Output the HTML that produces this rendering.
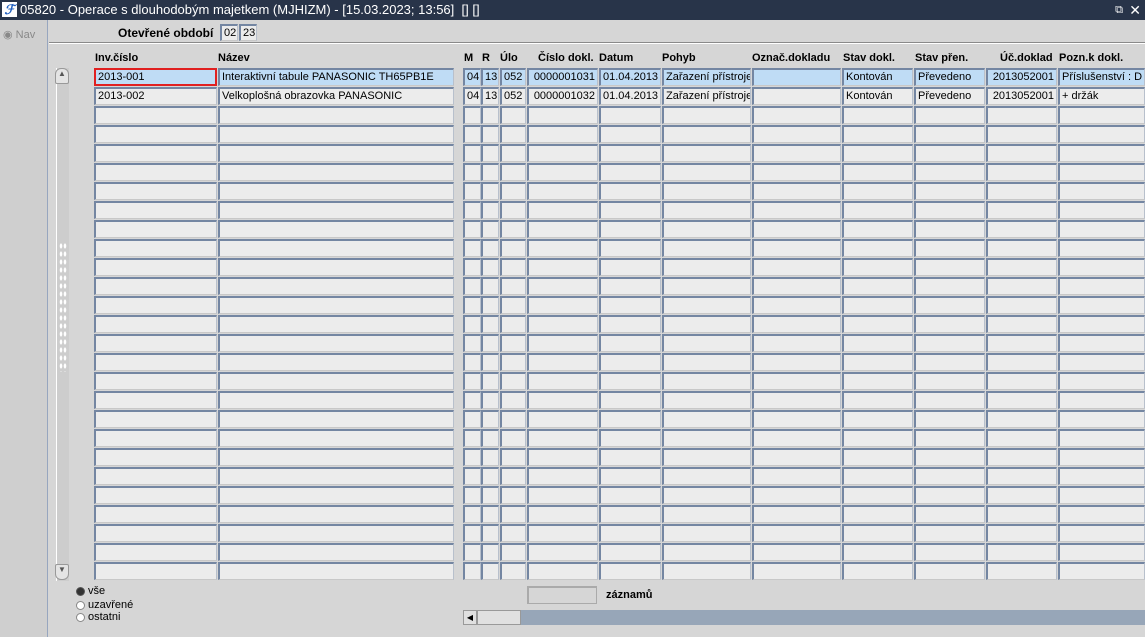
<!DOCTYPE html>
<html><head><meta charset="utf-8"><style>
*{box-sizing:border-box;margin:0;padding:0}
body{width:1145px;height:637px;background:#d6d6d6;font-family:"Liberation Sans",Arial,sans-serif;font-size:11px;color:#000;position:relative;overflow:hidden}
.t{position:absolute;left:0;top:0;width:1145px;height:20px;background:#283449;color:#fff;font-size:13px;line-height:20px;padding-left:20px}
.logo{position:absolute;left:2px;top:2px;width:15px;height:15px;background:#fff;color:#1f5fc0;font-weight:bold;font-style:italic;font-size:13px;line-height:15px;text-align:center}
.a{position:absolute}
.f{position:absolute;height:18px;background:#ececec;border-top:2px solid #7486a2;border-left:2px solid #7486a2;border-right:1px solid #b8c0cc;border-bottom:1px solid #c8c8c8;line-height:15px;padding-left:2px;white-space:nowrap;overflow:hidden}
.s{background:#bfdcf5}
.h{position:absolute;top:52px;font-weight:bold;font-size:11px}
.r{text-align:right;padding-right:2px}
.rad{position:absolute;width:9px;height:9px;border-radius:50%;background:#fff;border:1px solid #888}
</style></head><body>
<div class="t"><div class="logo">ℱ</div>05820 - Operace s dlouhodobým majetkem (MJHIZM) - [15.03.2023; 13:56]&nbsp; [] []
<span style="position:absolute;right:22px;top:0;font-size:11px">⧉</span><span style="position:absolute;right:4px;top:0;font-size:14px">✕</span></div>
<div class="a" style="left:0;top:20px;width:48px;height:617px;background:#cfcfcf;border-right:1px solid #97a6bf"></div>
<div class="a" style="left:3px;top:28px;color:#888;font-size:11px">◉ Nav</div>
<div class="a" style="left:118px;top:26px;font-weight:bold;font-size:12px">Otevřené období</div>
<div class="f" style="left:220px;top:24px;width:18px;height:17px">02</div>
<div class="f" style="left:239px;top:24px;width:18px;height:17px">23</div>
<div class="a" style="left:49px;top:42px;width:1096px;height:1px;background:#8a8a8a"></div>
<div class="a" style="left:49px;top:43px;width:1096px;height:1px;background:#fff"></div>
<div class="a" style="left:56px;top:68px;width:1px;height:513px;background:#fff"></div>
<div class="a" style="left:57px;top:68px;width:12px;height:513px;background:#cdcdcd"></div>
<div class="a" style="left:55px;top:68px;width:14px;height:16px;border:1px solid #999;border-radius:6px 6px 2px 2px;background:#e4e4e4;font-size:8px;text-align:center;color:#555">▲</div>
<div class="a" style="left:55px;top:564px;width:14px;height:16px;border:1px solid #999;border-radius:2px 2px 6px 6px;background:#e4e4e4;font-size:8px;text-align:center;color:#555">▼</div>
<div class="a" style="left:59px;top:242px;width:8px;height:130px;background-image:radial-gradient(#fff 1px,transparent 1.5px);background-size:4px 8px"></div>
<div class="h" style="left:95px">Inv.číslo</div>
<div class="h" style="left:218px">Název</div>
<div class="h" style="left:464px">M</div>
<div class="h" style="left:482px">R</div>
<div class="h" style="left:500px">Úlo</div>
<div class="h" style="left:538px">Číslo dokl.</div>
<div class="h" style="left:599px">Datum</div>
<div class="h" style="left:662px">Pohyb</div>
<div class="h" style="left:752px">Označ.dokladu</div>
<div class="h" style="left:843px">Stav dokl.</div>
<div class="h" style="left:915px">Stav přen.</div>
<div class="h" style="left:1000px">Úč.doklad</div>
<div class="h" style="left:1059px">Pozn.k dokl.</div>
<div id="g"></div>
<div class="rad" style="left:76px;top:587px;background:#333;border-color:#555"></div><div class="a" style="left:88px;top:585px">vše</div>
<div class="rad" style="left:76px;top:601px"></div><div class="a" style="left:88px;top:599px">uzavřené</div>
<div class="rad" style="left:76px;top:613px"></div><div class="a" style="left:88px;top:611px">ostatni</div>
<div class="f" style="left:527px;top:586px;width:70px;height:18px;border-color:#aaa;background:#d6d6d6"></div>
<div class="a" style="left:606px;top:589px;font-weight:bold">záznamů</div>
<div class="a" style="left:463px;top:610px;width:682px;height:15px;background:#97a6b8"></div>
<div class="a" style="left:463px;top:610px;width:14px;height:15px;background:#e0e0e0;border:1px solid #999;font-size:8px;line-height:13px;text-align:center">◀</div>
<div class="a" style="left:477px;top:610px;width:44px;height:15px;background:#e0e0e0;border:1px solid #999"></div>
<script>
var cols=[[94,123],[218,236],[463,18],[481,18],[500,26],[527,71],[599,62],[662,89],[752,89],[842,71],[914,71],[986,71],[1058,87]];
var d=[["2013-001","Interaktivní tabule PANASONIC TH65PB1E","04","13","052","0000001031","01.04.2013","Zařazení přístroje","","Kontován","Převedeno","2013052001","Příslušenství : D"],
["2013-002","Velkoplošná obrazovka PANASONIC","04","13","052","0000001032","01.04.2013","Zařazení přístroje","","Kontován","Převedeno","2013052001","+ držák"]];
var h="";
for(var r=0;r<27;r++){for(var c=0;c<cols.length;c++){var y=68+r*19;var cls="f";if(r==0)cls+=" s";if(c==5||c==11)cls+=" r";
var st="left:"+cols[c][0]+"px;top:"+y+"px;width:"+cols[c][1]+"px;";if(r==0&&c==0)st+="border:2px solid #e02020;background:#bfdcf5;";
h+='<div class="'+cls+'" style="'+st+'">'+(d[r]?d[r][c]:"")+'</div>';}}
document.getElementById("g").innerHTML=h;
</script>
</body></html>
